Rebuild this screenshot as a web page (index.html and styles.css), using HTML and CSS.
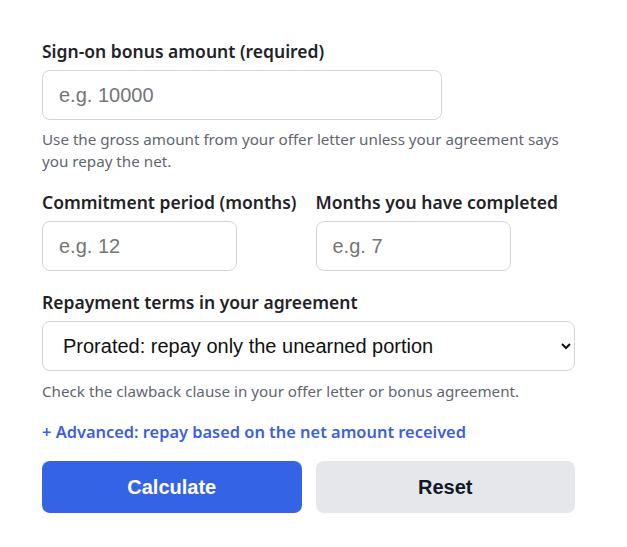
FILE: index.html
```html
<!DOCTYPE html>
<html lang="en">

<head>
    <meta charset="UTF-8" />
    <meta name="viewport" content="width=device-width, initial-scale=1.0" />
    <title>Sign-on bonus repayment</title>
    <link rel="stylesheet" href="styles.css">
</head>

<body>
    <form class="calc" onsubmit="return false">
        <div class="field">
            <label for="bonus">Sign-on bonus amount (required)</label>
            <input type="text" id="bonus" class="wide" placeholder="e.g. 10000" />
            <p class="help">Use the gross amount from your offer letter unless your agreement says you repay the net.</p>
        </div>

        <div class="row">
            <div class="field">
                <label for="period">Commitment period (months)</label>
                <input type="text" id="period" placeholder="e.g. 12" />
            </div>
            <div class="field">
                <label for="done">Months you have completed</label>
                <input type="text" id="done" placeholder="e.g. 7" />
            </div>
        </div>

        <div class="field terms">
            <label for="terms">Repayment terms in your agreement</label>
            <select id="terms">
                <option>Prorated: repay only the unearned portion</option>
                <option>Full: repay the whole bonus</option>
            </select>
            <p class="help">Check the clawback clause in your offer letter or bonus agreement.</p>
        </div>

        <a href="#" class="advanced">+ Advanced: repay based on the net amount received</a>

        <div class="row buttons">
            <button type="submit" class="btn primary">Calculate</button>
            <button type="reset" class="btn secondary">Reset</button>
        </div>
    </form>
</body>

</html>
```

FILE: styles.css
```css
html,
body {
    margin: 0;
    padding: 0;
    background: white;
    font-family: 'Noto Sans', 'Open Sans', sans-serif;
    color: #1f2328;
}

.calc {
    width: 533px;
    margin-left: 42px;
    padding-top: 40px;
    display: flex;
    flex-direction: column;
    gap: 19px;
}

.field {
    display: flex;
    flex-direction: column;
    align-items: flex-start;
}

.field label {
    font-size: 17.5px;
    font-weight: 600;
    line-height: 22px;
    margin-bottom: 8px;
    white-space: nowrap;
}

input,
select {
    box-sizing: border-box;
    height: 50px;
    width: 195px;
    border: 1px solid #d1d5db;
    border-radius: 8px;
    padding: 0 16px;
    font-family: 'Liberation Sans', Arial, sans-serif;
    font-size: 20px;
    color: #111;
    background: white;
}

input::placeholder {
    color: #757575;
}

input.wide {
    width: 400px;
}

select {
    width: 100%;
    padding: 0 8px 0 16px;
}

.terms {
    margin-top: 1px;
}

.help {
    margin: 8px 0 0;
    font-size: 15.2px;
    line-height: 22px;
    color: #5f6670;
}

.terms .help {
    margin-top: 9px;
}

.row {
    display: grid;
    grid-template-columns: 1fr 1fr;
    gap: 14px;
}

.advanced {
    color: #3c5fe0;
    font-size: 16.4px;
    font-weight: 600;
    line-height: 22px;
    text-decoration: none;
}

.buttons {
    margin-top: -1px;
}

.btn {
    height: 52px;
    border: none;
    border-radius: 8px;
    font-family: 'Liberation Sans', Arial, sans-serif;
    font-size: 20px;
    font-weight: bold;
    cursor: pointer;
}

.primary {
    background: #3563e6;
    color: white;
}

.secondary {
    background: #e5e7eb;
    color: #111827;
}
```
